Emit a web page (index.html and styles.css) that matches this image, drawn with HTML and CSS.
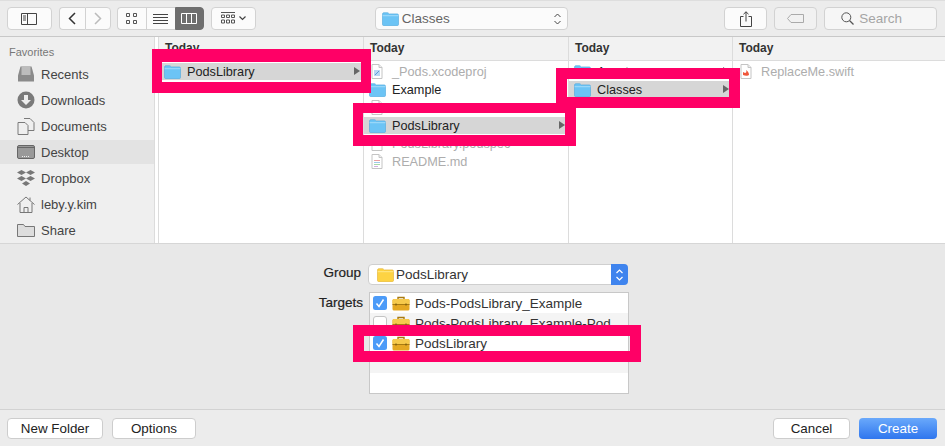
FILE: index.html
```html
<!DOCTYPE html>
<html lang="en">
<head>
    <meta charset="UTF-8">
    <meta name="viewport" content="width=device-width, initial-scale=1.0">
    <title>Add Files</title>
    <link rel="stylesheet" href="styles.css">
</head>
<body>

<svg class="defs" width="0" height="0">
    <symbol id="folder" viewBox="0 0 17 14">
        <path d="M.5 2.200C.5 1.200 1 .7 2 .7h3.600c.8 0 1 .9 1.800 1.200h7.600c1 0 1.500.5 1.500 1.400v9c0 1-.5 1.400-1.500 1.400H2c-1 0-1.500-.4-1.500-1.400z" fill="#6cc4f5" stroke="#4fa8dc" stroke-width=".6"/>
        <path d="M.6 3.700h15.800" stroke="#a4dcfa" stroke-width="1"/>
    </symbol>
    <symbol id="yellow-folder" viewBox="0 0 17 14">
        <path d="M.5 2.200C.5 1.200 1 .7 2 .7h3.600c.8 0 1 .9 1.800 1.200h7.600c1 0 1.500.5 1.500 1.400v9c0 1-.5 1.400-1.500 1.400H2c-1 0-1.500-.4-1.500-1.400z" fill="#fdd343" stroke="#e3b02c" stroke-width=".6"/>
        <path d="M.6 3.700h15.800" stroke="#fee88c" stroke-width="1"/>
    </symbol>
    <symbol id="doc" viewBox="0 0 12 15">
        <path d="M1 .5h7l3 3v11H1z" fill="#fff" stroke="#c4c4c4"/>
        <path d="M8 .5v3h3" fill="#eee" stroke="#c4c4c4"/>
    </symbol>
    <symbol id="case" viewBox="0 0 18 15">
        <path d="M6 3V1.500h6V3" fill="none" stroke="#a87a12" stroke-width="1.400"/>
        <rect x=".5" y="3" width="17" height="11.500" rx="1.500" fill="#e5a823"/>
        <rect x=".5" y="3" width="17" height="5" rx="1.500" fill="#f6c94c"/>
        <path d="M.5 8.500h17" stroke="#a87a12"/>
        <path d="M4 7.500v2M14 7.500v2" stroke="#7b5a10" stroke-width="1.200"/>
    </symbol>
    <symbol id="check" viewBox="0 0 14 14">
        <rect width="14" height="14" rx="2.500" fill="#4c9bf8"/>
        <path d="M3.500 7.500l2.500 3 4.500-7" fill="none" stroke="#fff" stroke-width="1.500"/>
    </symbol>
</svg>

<div class="window">
    <header class="toolbar">
        <button class="tool sidebar-btn">
            <svg width="16" height="12" viewBox="0 0 16 12"><path d="M.5.5h15v11H.5zM6.500.5v11M2 3h3M2 5h3M2 7h3" fill="none" stroke="#444"/></svg>
        </button>
        <div class="segment nav-seg">
            <button class="tool">
                <svg width="8" height="13" viewBox="0 0 8 13"><path d="M7 1L1.500 6.500 7 12" fill="none" stroke="#333" stroke-width="1.500"/></svg>
            </button>
            <button class="tool">
                <svg width="8" height="13" viewBox="0 0 8 13"><path d="M1 1l5.500 5.500L1 12" fill="none" stroke="#bbb" stroke-width="1.500"/></svg>
            </button>
        </div>
        <div class="segment view-seg">
            <button class="tool">
                <svg width="11" height="11" viewBox="0 0 11 11"><path d="M.5.5h3v3h-3zM7.500.5h3v3h-3zM.5 7.500h3v3h-3zM7.500 7.500h3v3h-3z" fill="none" stroke="#555"/></svg>
            </button>
            <button class="tool">
                <svg width="15" height="10" viewBox="0 0 15 10"><path d="M0 .5h15M0 3.500h15M0 6.500h15M0 9.500h15" stroke="#444"/></svg>
            </button>
            <button class="tool is-active">
                <svg width="16" height="11" viewBox="0 0 16 11"><path d="M.5.5h15v10H.5zM5.500.5v10M10.500.5v10" fill="none" stroke="#fff"/></svg>
            </button>
        </div>
        <button class="tool arrange-btn">
            <svg width="14" height="13" viewBox="0 0 14 13"><path d="M0 .5h14M.5 3h3v2.500h-3zM5.500 3h3v2.500h-3zM10.500 3h3v2.500h-3zM.5 8h3v3h-3zM5.500 8h3v3h-3zM10.500 8h3v3h-3z" fill="none" stroke="#555"/></svg>
            <svg width="7" height="5" viewBox="0 0 7 5"><path d="M.5.5l3 3 3-3" fill="none" stroke="#444" stroke-width="1.200"/></svg>
        </button>
        <button class="tool path-popup">
            <svg class="icon-folder"><use href="#folder"/></svg>
            <span class="path-name">Classes</span>
            <svg class="stepper" width="7" height="12" viewBox="0 0 7 12"><path d="M.5 4l3-3 3 3M.5 8l3 3 3-3" fill="none" stroke="#444"/></svg>
        </button>
        <button class="tool share-btn">
            <svg width="12" height="16" viewBox="0 0 12 16"><path d="M3.500 5.500H.5v10h11v-10h-3M6 10.500V.8M3.500 3.200L6 .8l2.500 2.400" fill="none" stroke="#444"/></svg>
        </button>
        <button class="tool tag-btn">
            <svg width="17" height="9" viewBox="0 0 17 9"><path d="M4 .5h12.500v8H4L.5 4.500z" fill="none" stroke="#aaa"/></svg>
        </button>
        <div class="search">
            <svg width="13" height="13" viewBox="0 0 13 13"><circle cx="5.300" cy="5.300" r="4.500" fill="none" stroke="#555"/><path d="M8.500 8.500l4 4" stroke="#555" stroke-width="1.300"/></svg>
            <span>Search</span>
        </div>
    </header>

    <div class="browser">
        <aside class="sidebar">
            <h4>Favorites</h4>
            <a class="side-row">
                <svg width="17" height="16" viewBox="0 0 17 16"><path d="M3 .5h11l2.500 9v6H.5v-6z" fill="#8a8a8a"/><path d="M4 2h9M4 4h9M4 6h9M4 8h9" stroke="#eee"/></svg>
                Recents
            </a>
            <a class="side-row">
                <svg width="18" height="18" viewBox="0 0 18 18"><circle cx="9" cy="9" r="8.500" fill="#7a7a7a"/><path d="M7 4h4v5h3l-5 5-5-5h3z" fill="#eee"/></svg>
                Downloads
            </a>
            <a class="side-row">
                <svg width="17" height="17" viewBox="0 0 17 17"><path d="M.5 4.500h7l3 3v9H.5zM6.500 .5h6l4 4v8h-6" fill="none" stroke="#7a7a7a"/></svg>
                Documents
            </a>
            <a class="side-row is-selected">
                <svg width="18" height="14" viewBox="0 0 18 14"><rect x=".5" y=".5" width="17" height="13" rx="1.500" fill="#999" stroke="#666"/><path d="M1 2.500h16" stroke="#666"/><path d="M5 11.500h8" stroke="#eee" stroke-dasharray="1 1"/></svg>
                Desktop
            </a>
            <a class="side-row">
                <svg width="18" height="16" viewBox="0 0 18 16"><path d="M4.500 0L9 2.500 4.500 5 0 2.500zM13.500 0L18 2.500 13.500 5 9 2.500zM4.500 6L9 8.500 4.500 11 0 8.500zM13.500 6L18 8.500 13.500 11 9 8.500zM9 11l4 2.500L9 16l-4-2.500z" fill="#777"/></svg>
                Dropbox
            </a>
            <a class="side-row">
                <svg width="18" height="17" viewBox="0 0 18 17"><path d="M.5 8.500L9 1l8.500 7.500M3 7v9.500h12V7M13 1.500v3M7 16.500v-5h4v5" fill="none" stroke="#777"/></svg>
                leby.y.kim
            </a>
            <a class="side-row">
                <svg width="18" height="14" viewBox="0 0 18 14"><path d="M.5 13.500V1.500h6l1.500 2h9.500v10z" fill="#ddd" stroke="#777"/></svg>
                Share
            </a>
        </aside>
        <div class="divider"></div>

        <section class="column col-one">
            <h5>Today</h5>
            <div class="col-row is-current"><svg class="icon-folder"><use href="#folder"/></svg>PodsLibrary<i class="arrow"></i></div>
        </section>
        <section class="column col-two">
            <h5>Today</h5>
            <div class="col-row is-dim">
                <svg class="icon-doc" viewBox="0 0 12 15"><use href="#doc" width="12" height="15"/><path d="M3 6h6v6H3z" fill="#b9d8f4"/><path d="M4 11l4-4" stroke="#5a9bd8"/></svg>
                _Pods.xcodeproj
            </div>
            <div class="col-row"><svg class="icon-folder"><use href="#folder"/></svg>Example</div>
            <div class="col-row is-dim"><svg class="icon-doc"><use href="#doc"/></svg>LICENSE</div>
            <div class="col-row is-current"><svg class="icon-folder"><use href="#folder"/></svg>PodsLibrary<i class="arrow"></i></div>
            <div class="col-row is-dim"><svg class="icon-doc"><use href="#doc"/></svg>PodsLibrary.podspec</div>
            <div class="col-row is-dim">
                <svg class="icon-doc" viewBox="0 0 12 15"><use href="#doc" width="12" height="15"/><path d="M3 6.500h6" stroke="#e8a0a0"/><path d="M3 8.500h6" stroke="#a0c8e8"/><path d="M3 10.500h6" stroke="#a8d8a8"/><path d="M3 12.500h4" stroke="#d0b0e0"/></svg>
                README.md
            </div>
        </section>
        <section class="column col-three">
            <h5>Today</h5>
            <div class="col-row"><svg class="icon-folder"><use href="#folder"/></svg>Assets<i class="arrow"></i></div>
            <div class="col-row is-current"><svg class="icon-folder"><use href="#folder"/></svg>Classes<i class="arrow"></i></div>
        </section>
        <section class="column col-four">
            <h5>Today</h5>
            <div class="col-row is-dim">
                <svg class="icon-doc" viewBox="0 0 12 15"><use href="#doc" width="12" height="15"/><path d="M3 11c2 1 5 1 6 0 0-2-1-4-3-5 1 2 0 3-1 3L3 8z" fill="#f0563a"/></svg>
                ReplaceMe.swift
            </div>
        </section>
    </div>

    <main class="options">
        <label class="form-label group-label">Group</label>
        <div class="group-popup">
            <svg class="icon-folder"><use href="#yellow-folder"/></svg>
            <span>PodsLibrary</span>
            <b class="popup-arrows">
                <svg width="7" height="12" viewBox="0 0 7 12"><path d="M.5 4l3-3 3 3M.5 8l3 3 3-3" fill="none" stroke="#fff" stroke-width="1.200"/></svg>
            </b>
        </div>
        <label class="form-label targets-label">Targets</label>
        <div class="target-list">
            <div class="target"><svg class="icon-check"><use href="#check"/></svg><svg class="icon-case"><use href="#case"/></svg>Pods-PodsLibrary_Example</div>
            <div class="target"><span class="unchecked"></span><svg class="icon-case"><use href="#case"/></svg>Pods-PodsLibrary_Example-Pod</div>
            <div class="target"><svg class="icon-check"><use href="#check"/></svg><svg class="icon-case"><use href="#case"/></svg>PodsLibrary</div>
            <div class="target"></div>
            <div class="target"></div>
        </div>
    </main>

    <footer class="actions">
        <button class="btn btn-folder">New Folder</button>
        <button class="btn btn-options">Options</button>
        <span class="spacer"></span>
        <button class="btn btn-cancel">Cancel</button>
        <button class="btn btn-create">Create</button>
    </footer>

    <div class="mark mark-one"></div>
    <div class="mark mark-two"></div>
    <div class="mark mark-three"></div>
    <div class="mark mark-four"></div>
</div>

</body>
</html>
```

FILE: styles.css
```css
* {
    box-sizing: border-box;
}
body {
    margin: 0;
    font-family: "Liberation Sans", Arial, sans-serif;
    font-size: 13px;
    color: #333;
    background: #e8e8e8;
}
.defs {
    position: absolute;
}
button {
    font: inherit;
    color: inherit;
    padding: 0;
}
.window {
    position: relative;
    width: 945px;
    height: 446px;
    overflow: hidden;
    display: flex;
    flex-direction: column;
}

/* toolbar */
.toolbar {
    height: 37px;
    flex: none;
    display: flex;
    align-items: flex-start;
    padding: 7px 8px 0 7px;
    background: #ececec;
    border-top: 1px solid #dedede;
    border-bottom: 1px solid #c8c8c8;
}
.tool {
    height: 23px;
    display: flex;
    align-items: center;
    justify-content: center;
    background: #fbfbfb;
    border: 1px solid #d2d2d2;
    border-radius: 4px;
}
.sidebar-btn {
    width: 45px;
    margin-top: -1px;
}
.segment {
    display: flex;
    margin-top: -1px;
}
.segment .tool {
    border-radius: 0;
    border-right-width: 0;
}
.segment .tool:first-child {
    border-radius: 4px 0 0 4px;
}
.segment .tool:last-child {
    border-radius: 0 4px 4px 0;
    border-right-width: 1px;
}
.nav-seg {
    margin-left: 7px;
}
.nav-seg .tool {
    width: 26px;
}
.view-seg {
    margin-left: 6px;
}
.view-seg .tool {
    width: 29px;
}
.view-seg .is-active {
    background: #6e6e6e;
    border-color: #6e6e6e;
}
.arrange-btn {
    width: 45px;
    margin: -1px 0 0 7px;
    gap: 4px;
}
.path-popup {
    width: 194px;
    margin: -1px 0 0 119px;
    justify-content: flex-start;
    padding: 0 6px;
    gap: 3px;
    font-size: 13.5px;
    color: #666;
}
.path-name {
    flex: 1;
    text-align: left;
}
.share-btn,
.tag-btn {
    width: 43px;
    margin-top: -1px;
}
.share-btn {
    margin-left: 156px;
}
.tag-btn {
    margin-left: 7px;
    background: #f1f1f1;
}
.search {
    width: 113px;
    height: 23px;
    margin: -1px 0 0 7px;
    display: flex;
    align-items: center;
    gap: 5px;
    padding-left: 16px;
    font-size: 13.5px;
    color: #a5a5a5;
    background: #f6f6f6;
    border: 1px solid #d2d2d2;
    border-radius: 4px;
}

/* browser */
.browser {
    height: 207px;
    flex: none;
    display: flex;
    background: #fff;
    border-bottom: 1px solid #d6d6d6;
}
.sidebar {
    width: 155px;
    flex: none;
    padding-top: 8px;
    background: #efefef;
    border-right: 1px solid #dcdcdc;
}
.sidebar h4 {
    margin: 0 0 2px 9px;
    height: 14px;
    font-size: 11px;
    line-height: 14px;
    font-weight: normal;
    color: #777;
}
.side-row {
    height: 26px;
    display: flex;
    align-items: center;
    padding-left: 17px;
    gap: 6px;
    position: relative;
    color: #444;
}
.side-row svg {
    width: 18px;
    flex: none;
}
.side-row.is-selected {
    height: 24px;
    margin: 1px 0;
    background: #e3e3e3;
}
.divider {
    width: 4px;
    flex: none;
    border-right: 1px solid #dcdcdc;
}
.column {
    flex: none;
    border-right: 1px solid #dcdcdc;
}
.column h5 {
    margin: 0 0 1px;
    height: 24px;
    padding-left: 6px;
    font-size: 12px;
    line-height: 23px;
    font-weight: bold;
    color: #333;
    background: #f2f2f2;
    border-bottom: 1px solid #dcdcdc;
}
.col-one {
    width: 205px;
}
.col-two {
    width: 205px;
}
.col-three {
    width: 164px;
}
.col-four {
    flex: 1;
    border-right: 0;
}
.col-row {
    height: 18px;
    display: flex;
    align-items: center;
    padding-left: 5px;
    gap: 6px;
    position: relative;
    font-size: 12.7px;
    color: #222;
    border-top: 1px solid transparent;
}
.col-row.is-dim {
    color: #adadad;
}
.col-row.is-current {
    background: #d6d6d6;
    border-top-color: #fff;
}
.arrow {
    position: absolute;
    right: 3px;
    top: 4px;
    border-left: 6px solid #666;
    border-top: 4px solid transparent;
    border-bottom: 4px solid transparent;
}
.icon-folder {
    width: 17px;
    height: 14px;
    flex: none;
}
.icon-doc {
    width: 12px;
    height: 15px;
    margin: 0 3px 0 2px;
    flex: none;
}

/* group and targets */
.options {
    height: 165px;
    flex: none;
    display: grid;
    grid-template-columns: 60px 260px;
    grid-template-rows: 21px 102px;
    column-gap: 6px;
    row-gap: 7px;
    align-items: start;
    padding: 20px 0 0 303px;
    font-size: 13.5px;
    background: #e8e8e8;
}
.form-label {
    text-align: right;
    color: #222;
    -webkit-text-stroke: 0.2px #222;
}
.group-label {
    line-height: 18px;
    padding-right: 2px;
}
.targets-label {
    line-height: 22px;
}
.group-popup {
    height: 21px;
    margin: 0 1px 0 -1px;
    display: flex;
    align-items: center;
    gap: 2px;
    padding-left: 8px;
    background: #fff;
    border: 1px solid #cfcfcf;
    border-radius: 4px;
    position: relative;
}
.popup-arrows {
    position: absolute;
    right: -1px;
    top: -1px;
    width: 17px;
    height: 21px;
    display: flex;
    align-items: center;
    justify-content: center;
    background: #3f84ee;
    border-radius: 0 4px 4px 0;
}
.target-list {
    height: 102px;
    background: #fff;
    border: 1px solid #c8c8c8;
}
.target {
    height: 20px;
    display: flex;
    align-items: center;
    padding-left: 3px;
    color: #333;
}
.target:nth-child(even) {
    background: #f4f4f4;
}
.icon-check,
.unchecked {
    width: 14px;
    height: 14px;
    flex: none;
}
.unchecked {
    background: #fff;
    border: 1px solid #c4c4c4;
    border-radius: 3px;
}
.icon-case {
    width: 18px;
    height: 15px;
    margin: 0 5px;
    flex: none;
}

/* footer */
.actions {
    height: 37px;
    flex: none;
    display: flex;
    align-items: flex-start;
    gap: 9px;
    padding: 8px 8px 0 7px;
    background: #ececec;
    border-top: 1px solid #d2d2d2;
}
.spacer {
    flex: 1;
}
.btn {
    height: 21px;
    font-size: 13.4px;
    background: #fff;
    border: 1px solid #cdcdcd;
    border-radius: 4px;
    color: #222;
}
.btn-folder {
    width: 96px;
}
.btn-options {
    width: 84px;
}
.btn-cancel {
    width: 77px;
}
.btn-create {
    width: 78px;
    color: #fff;
    border: 0;
    background: linear-gradient(#6aa9fb, #2f76ee);
}

/* pink annotation boxes */
.mark {
    position: absolute;
    border: 10px solid #ff0066;
}
.mark-one {
    left: 152px;
    top: 49px;
    width: 219px;
    height: 44px;
    border-width: 13px 10px 11px;
}
.mark-two {
    left: 353px;
    top: 103px;
    width: 223px;
    height: 43px;
    border-width: 10px 11px 11px 10px;
}
.mark-three {
    left: 556px;
    top: 68px;
    width: 184px;
    height: 40px;
    border-width: 11px;
}
.mark-four {
    left: 353px;
    top: 325px;
    width: 288px;
    height: 37px;
    border-width: 11px;
}
```
